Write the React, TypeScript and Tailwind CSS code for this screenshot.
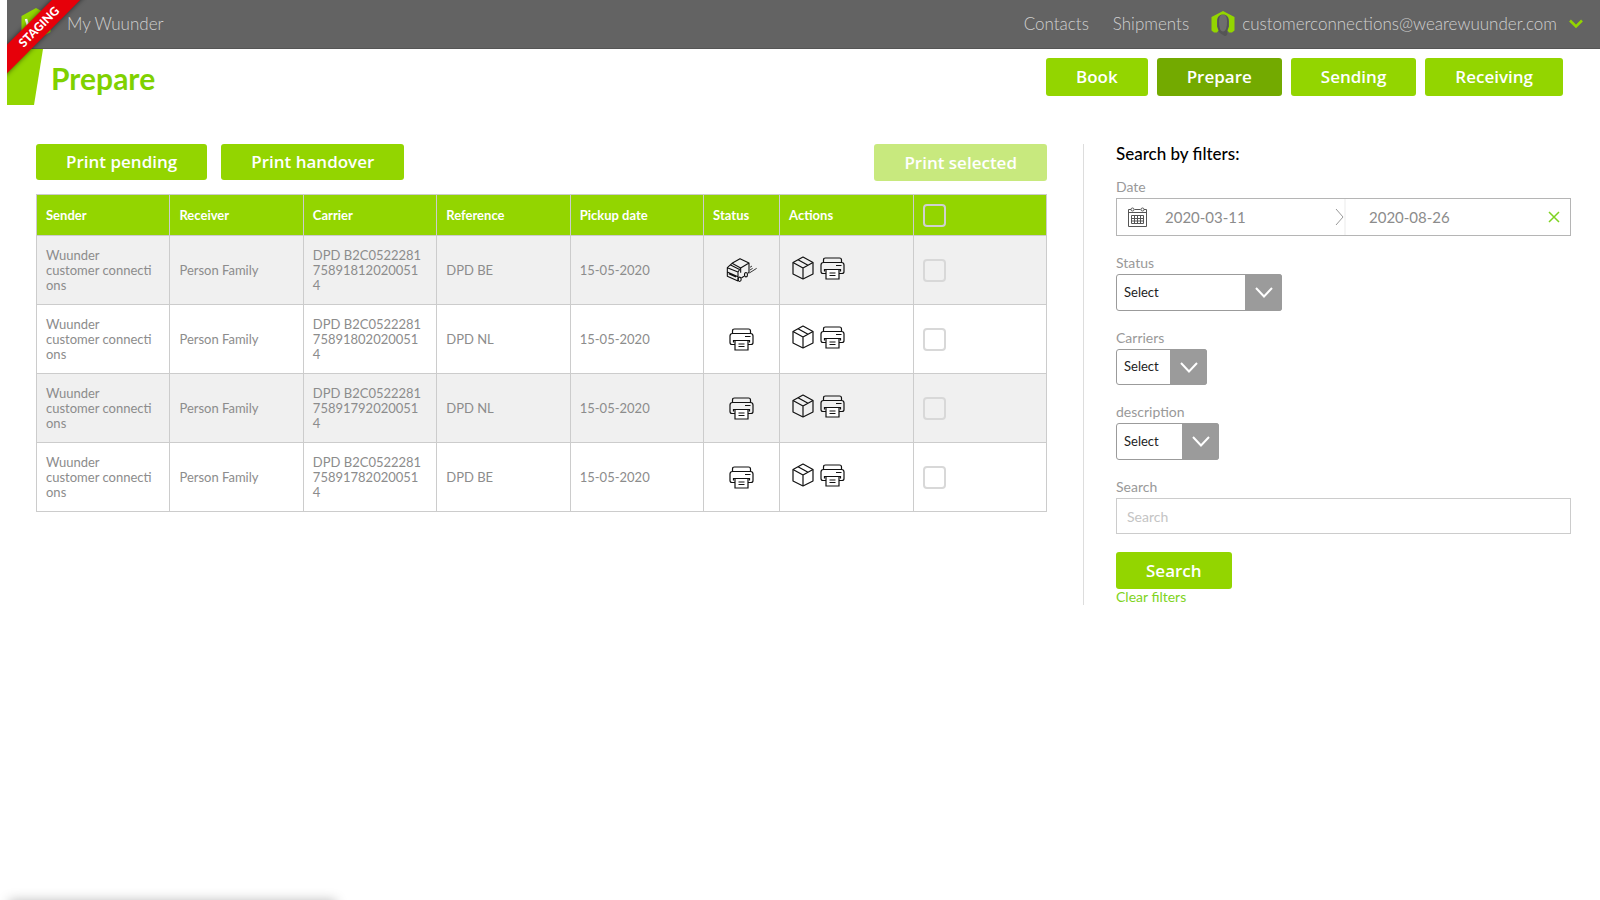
import {useState} from 'react';

type Shipment = {
  id: number;
  sender: string;
  receiver: string;
  carrier: string;
  reference: string;
  pickupDate: string;
  status: 'sent' | 'printed';
};

const sender = 'Wuunder\ncustomer connections';

const shipments: Shipment[] = [
  {id: 1, sender, receiver: 'Person Family', carrier: 'DPD B2C0522281758918120200514', reference: 'DPD BE', pickupDate: '15-05-2020', status: 'sent'},
  {id: 2, sender, receiver: 'Person Family', carrier: 'DPD B2C0522281758918020200514', reference: 'DPD NL', pickupDate: '15-05-2020', status: 'printed'},
  {id: 3, sender, receiver: 'Person Family', carrier: 'DPD B2C0522281758917920200514', reference: 'DPD NL', pickupDate: '15-05-2020', status: 'printed'},
  {id: 4, sender, receiver: 'Person Family', carrier: 'DPD B2C0522281758917820200514', reference: 'DPD BE', pickupDate: '15-05-2020', status: 'printed'}
];

const tabs = ['Book', 'Prepare', 'Sending', 'Receiving'];
const headings = ['Sender', 'Receiver', 'Carrier', 'Reference', 'Pickup date', 'Status', 'Actions'];

const buttonClass = "rounded-[3px] px-[30px] font-['Open_Sans',sans-serif] text-[17px] font-semibold text-white";

function LogoIcon() {
  return (
    <svg aria-hidden="true" className="h-8 w-[30px]" viewBox="0 0 30 32">
      <path d="M15 0 29.500 8v16L15 32 .5 24V8z" fill="#93d500" />
      <path d="M5 11l4 13 6-12 6 12 4-13" fill="none" stroke="#fff" strokeWidth="2.500" />
    </svg>
  );
}

function AvatarIcon() {
  return (
    <svg aria-hidden="true" className="h-7 w-6" viewBox="0 0 24 28">
      <path d="M12 4c-4 0-5.500 3-5.500 7v6c0 3 1.500 6 4 7l3 2c2.500 0 3.500-2 2.500-4l1.500-5v-6c0-4-1.500-7-5.500-7z" fill="#555" />
      <path d="M12 4.500c-3 0-4 3-4 7 0 5 1 10 4 10s4-5 4-10c0-4-1-7-4-7z" fill="#6e6e6e" />
      <path d="M12 1 23.500 7v13.500L21 22.500h-3l-1.500-2 1.500-4V11c0-4-2.500-6.500-6-6.500S6 7 6 11v5.500l1.500 4-1.500 2H3L.5 20.500V7z" fill="#93d500" />
    </svg>
  );
}

function PrinterIcon() {
  return (
    <svg aria-hidden="true" className="h-[23px] w-[25px]" fill="none" stroke="#111" strokeWidth="1.200" viewBox="0 0 25 23">
      <path d="M3.500 5.500V3Q3.500 1 5.500 1h14q2 0 2 2v2.500" />
      <path d="M6 16.500H3Q1 16.500 1 14.500V8q0-2.500 2.500-2.500h18Q24 5.500 24 8v6.500q0 2-2 2h-3" />
      <path d="M4.500 14.500v-2h16v2M16 8.500h5.500" />
      <path d="M6 12.500h13V22H6z" fill="#fff" />
      <path d="M9.500 16h6M9.500 18.500h6" />
    </svg>
  );
}

function BoxIcon() {
  return (
    <svg aria-hidden="true" className="h-6 w-[22px]" fill="none" stroke="#111" strokeLinejoin="round" strokeWidth="1.200" viewBox="0 0 22 24">
      <path d="M11 1 21 6.500v11.500L11 23 1 18V6.500z" />
      <path d="M1 6.500 11 12l10-5.500M11 12v11M6 3.800l10 5.500" />
    </svg>
  );
}

function TruckIcon() {
  return (
    <svg aria-hidden="true" className="h-[26px] w-8" fill="none" stroke="#111" strokeLinejoin="round" strokeWidth="3.300" viewBox="12 18 96 78">
      <path d="M30 37 54 23l27 13v28l-4 3M81 36 56 51 30 37M56 51v14M66 76l-8 5" />
      <path d="M30 37 16 50v26l32 14V63M16 50l32 13 8-12M26 42l25 13M16 63l32 14M20 68l22 10" />
      <ellipse cx="53" cy="85" rx="4.500" ry="6.500" />
      <ellipse cx="72" cy="71" rx="4.500" ry="6.500" />
      <path d="M82 66l22-14M84 57l8-5M84 49l6-4" strokeWidth="2.500" />
    </svg>
  );
}

function CalendarIcon() {
  return (
    <svg aria-hidden="true" className="h-5 w-[19px] shrink-0" fill="none" stroke="#555" viewBox="0 0 19 20">
      <path d="M3 2.500H.5v17h18v-17H16M6.500 2.500h6M.5 5.500h18" />
      <circle cx="4.500" cy="2.500" r="1.500" />
      <circle cx="14.500" cy="2.500" r="1.500" />
      <path d="M3.500 8.500h12v8h-12zM6.500 8.500v8M9.500 8.500v8M12.500 8.500v8M3.500 11.500h12M3.500 14h12" />
    </svg>
  );
}

function FilterSelect({id, label, size}: {id: string; label: string; size: string}) {
  return (
    <div>
      <label className="block text-[14px] leading-[18px] text-[#999]" htmlFor={id}>{label}</label>
      <div className={`relative mt-[2px] ${size}`}>
        <select
          className="h-full w-full appearance-none rounded-[3px] border border-[#9b9b9b] bg-white pl-[7px] text-[13px] text-[#222]"
          id={id}
        >
          <option>Select</option>
        </select>
        <span className="pointer-events-none absolute inset-y-0 right-0 grid w-[37px] place-items-center rounded-r-[3px] bg-[#9b9b9b]">
          <svg aria-hidden="true" className="h-[11px] w-[18px]" fill="none" stroke="#fff" strokeWidth="2" viewBox="0 0 18 11">
            <path d="M1 1l8 8.500L17 1" />
          </svg>
        </span>
      </div>
    </div>
  );
}

export default function App() {
  const [selected, setSelected] = useState<number[]>([]);

  function toggle(id: number) {
    setSelected((ids) => (ids.includes(id) ? ids.filter((item) => item !== id) : [...ids, id]));
  }

  function toggleAll() {
    setSelected((ids) => (ids.length === shipments.length ? [] : shipments.map((item) => item.id)));
  }

  return (
    <div className="relative min-h-screen overflow-hidden bg-white pl-[7px] font-[Lato,sans-serif]">
      <header className="flex h-[49px] items-center justify-between border-b border-[#555] bg-[#636363] pr-[17px] pl-[14px] text-[17px] font-light text-[#d0d0d0]">
        <a className="flex items-center gap-4" href="#home">
          <LogoIcon />
          <span>My Wuunder</span>
        </a>
        <nav className="flex items-center">
          <a className="mr-6" href="#contacts">Contacts</a>
          <a className="mr-[22px]" href="#shipments">Shipments</a>
          <button className="flex items-center" type="button">
            <AvatarIcon />
            <span className="mr-3 ml-[7px]">customerconnections@wearewuunder.com</span>
            <svg aria-hidden="true" className="h-[10px] w-[14px]" fill="none" stroke="#93d500" strokeWidth="2.500" viewBox="0 0 14 10">
              <path d="M1 1.500l6 6 6-6" />
            </svg>
          </button>
        </nav>
      </header>

      <div className="absolute top-0 left-[7px] h-20 w-20 overflow-hidden">
        <div className="absolute top-[17px] -left-[28px] w-[120px] -rotate-45 bg-[#e6000a] text-center text-[12px] leading-[20px] font-black text-white shadow-[0_0_5px_rgba(0,0,0,0.6)]">
          STAGING
        </div>
      </div>

      <div className="flex items-start justify-between pr-[37px]">
        <div className="flex">
          <svg aria-hidden="true" className="h-14 w-9" viewBox="0 0 36 56">
            <path d="M0 0h36l-9 56H0z" fill="#93d500" />
          </svg>
          <h1 className="mt-3 ml-2 text-[30px] leading-[34px] font-bold text-[#7fd100]">Prepare</h1>
        </div>
        <nav className="mt-[9px] flex gap-[9px]">
          {tabs.map((tab) => (
            <button
              aria-current={tab === 'Prepare' ? 'page' : undefined}
              className={`${buttonClass} h-[38px] ${tab === 'Prepare' ? 'bg-[#73aa00]' : 'bg-[#93d500]'}`}
              key={tab}
              type="button"
            >
              {tab}
            </button>
          ))}
        </nav>
      </div>

      <div className="mt-[39px] flex items-start pr-[29px] pl-[29px]">
        <main className="min-w-0 flex-1">
          <div className="flex items-start">
            <button className={`${buttonClass} h-9 bg-[#93d500]`} type="button">Print pending</button>
            <button className={`${buttonClass} ml-[14px] h-9 bg-[#93d500]`} type="button">Print handover</button>
            <button
              className={`${buttonClass} ml-auto h-[37px] bg-[#93d500] disabled:opacity-50`}
              disabled={selected.length === 0}
              type="button"
            >
              Print selected
            </button>
          </div>

          <table className="mt-[13px] w-full table-fixed border-collapse text-left text-[13px] leading-[15px] text-[#8c8c8c]">
            <colgroup>
              <col />
              <col />
              <col />
              <col />
              <col />
              <col className="w-[76px]" />
              <col />
              <col />
            </colgroup>
            <thead className="bg-[#93d500] text-white">
              <tr className="h-[41px]">
                {headings.map((heading) => (
                  <th className="border border-[#ccc] px-[9px] font-bold" key={heading}>{heading}</th>
                ))}
                <th className="border border-[#ccc] px-[9px]">
                  <input
                    aria-label="Select all"
                    checked={selected.length === shipments.length}
                    className="block size-[23px] appearance-none rounded-[4px] border-2 border-[#d0d0d0] checked:bg-[#73aa00]"
                    type="checkbox"
                    onChange={toggleAll}
                  />
                </th>
              </tr>
            </thead>
            <tbody>
              {shipments.map((item) => (
                <tr className="h-[69px] odd:bg-[#f0f0f0]" key={item.id}>
                  <td className="border border-[#ccc] pr-[13px] pl-[9px] break-all whitespace-pre-line">{item.sender}</td>
                  <td className="border border-[#ccc] px-[9px]">{item.receiver}</td>
                  <td className="border border-[#ccc] pr-[13px] pl-[9px] break-all">{item.carrier}</td>
                  <td className="border border-[#ccc] px-[9px]">{item.reference}</td>
                  <td className="border border-[#ccc] px-[9px]">{item.pickupDate}</td>
                  <td className="border border-[#ccc]">
                    <div className="flex justify-center">
                      {item.status === 'sent' ? <TruckIcon /> : <PrinterIcon />}
                    </div>
                  </td>
                  <td className="border border-[#ccc] px-3">
                    <div className="flex items-center gap-[6px] pb-1">
                      <button aria-label="Show parcel" type="button"><BoxIcon /></button>
                      <button aria-label="Print label" type="button"><PrinterIcon /></button>
                    </div>
                  </td>
                  <td className="border border-[#ccc] px-[9px]">
                    <input
                      aria-label={`Select shipment ${item.id}`}
                      checked={selected.includes(item.id)}
                      className="block size-[23px] appearance-none rounded-[4px] border-2 border-[#d8d8d8] checked:bg-[#93d500]"
                      type="checkbox"
                      onChange={() => toggle(item.id)}
                    />
                  </td>
                </tr>
              ))}
            </tbody>
          </table>
        </main>

        <aside className="ml-9 w-[488px] border-l border-[#ddd] pl-8">
          <h2 className="text-[17px] leading-[20px] font-medium text-black">Search by filters:</h2>
          <form className="mt-[14px] grid grid-cols-1 gap-[18px]" onSubmit={(event) => event.preventDefault()}>
            <div>
              <label className="block text-[14px] leading-[18px] text-[#999]" htmlFor="date-from">Date</label>
              <div className="mt-[2px] flex h-[38px] items-center border border-[#b5b5b5] pr-[10px] pl-[11px]">
                <CalendarIcon />
                <input className="ml-[18px] w-[170px] text-[15px] text-[#8c8c8c]" defaultValue="2020-03-11" id="date-from" type="text" />
                <svg aria-hidden="true" className="h-[18px] w-[9px] shrink-0" fill="none" stroke="#999" viewBox="0 0 9 18">
                  <path d="M1 1l7 8-7 8" />
                </svg>
                <input
                  aria-label="Date to"
                  className="h-full min-w-0 flex-1 border-l-2 border-[#f5f5f5] pl-[23px] text-[15px] text-[#8c8c8c]"
                  defaultValue="2020-08-26"
                  type="text"
                />
                <button aria-label="Clear dates" type="button">
                  <svg aria-hidden="true" className="size-3" fill="none" stroke="#7ed321" strokeWidth="1.500" viewBox="0 0 12 12">
                    <path d="M1 1l10 10M11 1 1 11" />
                  </svg>
                </button>
              </div>
            </div>
            <FilterSelect id="status" label="Status" size="h-[37px] w-[166px]" />
            <FilterSelect id="carriers" label="Carriers" size="h-9 w-[91px]" />
            <FilterSelect id="description" label="description" size="h-[37px] w-[103px]" />
            <div>
              <label className="block text-[14px] leading-[18px] text-[#999]" htmlFor="search">Search</label>
              <input
                className="mt-[2px] block h-9 w-full border border-[#ccc] px-[10px] text-[14px] text-[#555] placeholder:text-[#c4c4c4]"
                id="search"
                placeholder="Search"
                type="text"
              />
            </div>
            <div>
              <button className={`${buttonClass} block h-[37px] bg-[#93d500]`} type="submit">Search</button>
              <a className="block text-[14px] leading-[16px] text-[#7ed321]" href="#clear">Clear filters</a>
            </div>
          </form>
        </aside>
      </div>

      <div className="absolute -bottom-5 left-[9px] h-5 w-[327px] bg-white shadow-[0_0_12px_rgba(0,0,0,0.25)]" />
    </div>
  );
}
